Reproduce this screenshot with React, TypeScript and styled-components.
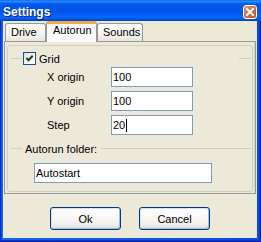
import React from "react";
import styled, { createGlobalStyle, css } from "styled-components";

const Global = createGlobalStyle`
  html, body { margin: 0; padding: 0; overflow: hidden; background: #ffffff; }
  * { box-sizing: border-box; }
`;

const UI_FONT = `"Liberation Sans", Arial, sans-serif`;

const Window = styled.div`
  width: 261px;
  height: 242px;
  display: flex;
  flex-direction: column;
  background: linear-gradient(to right, #0019cf 0px, #0842d8 1px, #1b63ec 2px, #0a48dc 100%);
  padding: 0 4px 4px 3px;
  font-family: ${UI_FONT};
  font-size: 11px;
  color: #000;
  box-shadow: inset -1px -1px 0 #001a9e, inset -2px -2px 0 #0a3fd0;
`;

const TitleBar = styled.div`
  height: 21px;
  margin: 0 -4px 0 -3px;
  padding: 0 4px 0 3px;
  display: flex;
  align-items: center;
  background: linear-gradient(
    to bottom,
    #0058ee 0%,
    #3593ff 5%,
    #1a7fff 10%,
    #0264f0 16%,
    #0057e5 24%,
    #0055eb 56%,
    #005bf5 66%,
    #0466fc 78%,
    #0060ef 88%,
    #0052d6 94%,
    #003ea6 100%
  );
`;

const Title = styled.span`
  color: #ffffff;
  font-family: ${UI_FONT};
  font-weight: bold;
  font-size: 12px;
  margin-top: 2px;
  text-shadow: 1px 1px 0 #0a1e8a;
`;

const CloseButton = styled.div`
  margin-left: auto;
  margin-top: 3px;
  width: 14px;
  height: 14px;
  border: 1px solid #ffffff;
  border-radius: 3px;
  background: linear-gradient(135deg, #e89670 0%, #d66f45 45%, #b9532a 100%);
  display: flex;
  align-items: center;
  justify-content: center;
`;

const Client = styled.div`
  flex: 1;
  background: #ece9d8;
  display: flex;
  flex-direction: column;
`;

const TabStrip = styled.div`
  height: 20px;
  padding-left: 2px;
  display: flex;
  align-items: flex-end;
  position: relative;
  z-index: 1;
`;

const Tab = styled.div<{ $active?: boolean; $w: number }>`
  width: ${(p) => p.$w}px;
  height: 18px;
  margin-bottom: 0;
  border: 1px solid #919b9c;
  border-bottom: none;
  border-radius: 3px 3px 0 0;
  background: linear-gradient(to bottom, #ffffff 0%, #f5f4ef 60%, #e7e5dc 100%);
  padding: 2px 0 0 5px;
  font-size: 11px;
  white-space: nowrap;
  ${(p) =>
    p.$active &&
    css`
      height: 21px;
      margin-bottom: -1px;
      border-top: 3px solid #f0a830;
      border-color: #f4b84c #919b9c #919b9c #919b9c;
      border-top-color: #f3a945;
      background: #fcfcfe;
      padding: 0 0 0 6px;
    `}
`;

const TabPanel = styled.div`
  margin-left: 1px;
  width: 252px;
  border: 1px solid #919b9c;
  background: #ece9d8;
  padding: 3px 2px 1px 2px;
  box-shadow: inset -1px 0 0 #d6d3c6;
`;

const Frame = styled.div`
  border: 1px solid #d0d0bf;
  border-radius: 3px;
  padding: 6px 1px 8px 3px;
  display: flex;
  flex-direction: column;
`;

const SectionHeader = styled.div<{ $gap?: number }>`
  height: 13px;
  display: flex;
  align-items: center;
  margin-top: ${(p) => p.$gap ?? 0}px;
`;

const Rule = styled.div<{ $w?: number }>`
  height: 1px;
  background: #d0d0bf;
  ${(p) => (p.$w ? `width: ${p.$w}px;` : `flex: 1;`)}
`;

const CheckBox = styled.div`
  width: 13px;
  height: 13px;
  margin-left: 1px;
  border: 1px solid #1c5180;
  background: linear-gradient(135deg, #dcdcd7 0%, #f5f5f2 50%, #ffffff 100%);
  display: flex;
  align-items: center;
  justify-content: center;
`;

const CheckLabel = styled.span`
  margin-left: 3px;
  flex: 1;
`;

const Caption = styled.span`
  margin: 0 4px 0 3px;
`;

const FieldGrid = styled.div`
  margin-top: 2px;
  margin-left: 36px;
  display: grid;
  grid-template-columns: 64px 82px;
  grid-auto-rows: 20px;
  row-gap: 4px;
  align-items: center;
`;

const Label = styled.span`
  white-space: nowrap;
`;

const Field = styled.div<{ $w?: number; $indent?: number; $gap?: number }>`
  height: 20px;
  ${(p) => (p.$w ? `width: ${p.$w}px;` : "")}
  margin-left: ${(p) => p.$indent ?? 0}px;
  margin-top: ${(p) => p.$gap ?? 0}px;
  border: 1px solid #7f9db9;
  background: #ffffff;
  padding: 0 0 0 1px;
  display: flex;
  align-items: center;
  white-space: nowrap;
`;

const Caret = styled.span`
  display: inline-block;
  width: 1px;
  height: 13px;
  background: #000;
  margin-left: 1px;
`;

const ButtonRow = styled.div`
  margin-top: 13px;
  display: flex;
  justify-content: center;
  gap: 18px;
`;

const Button = styled.div`
  width: 71px;
  height: 23px;
  border: 1px solid #003c74;
  border-radius: 3px;
  background: linear-gradient(to bottom, #ffffff 0%, #f7f6f2 55%, #ecebe5 85%, #d8d4c8 100%);
  box-shadow: inset -1px -1px 0 #a3b8f0, inset 1px 1px 0 #d5e2fb;
  display: flex;
  align-items: center;
  justify-content: center;
  font-size: 11px;
`;

export default function App() {
  return (
    <>
      <Global />
      <Window>
        <TitleBar>
          <Title>Settings</Title>
          <CloseButton>
            <svg width="10" height="10" viewBox="0 0 10 10">
              <path d="M2 2 L8 8 M8 2 L2 8" stroke="#ffffff" strokeWidth="2" strokeLinecap="square" />
            </svg>
          </CloseButton>
        </TitleBar>
        <Client>
          <TabStrip>
            <Tab $w={41}>Drive</Tab>
            <Tab $w={51} $active>
              Autorun
            </Tab>
            <Tab $w={46}>Sounds</Tab>
          </TabStrip>
          <TabPanel>
            <Frame>
              <SectionHeader>
                <Rule $w={11} />
                <CheckBox>
                  <svg width="11" height="11" viewBox="0 0 11 11">
                    <path d="M2.5 5 L4.5 7.2 L8.7 2.8" stroke="#22401a" strokeWidth="2" fill="none" />
                  </svg>
                </CheckBox>
                <CheckLabel>Grid</CheckLabel>
                <Rule $w={12} />
              </SectionHeader>
              <FieldGrid>
                <Label>X origin</Label>
                <Field>100</Field>
                <Label>Y origin</Label>
                <Field>100</Field>
                <Label>Step</Label>
                <Field>
                  20
                  <Caret />
                </Field>
              </FieldGrid>
              <SectionHeader $gap={7}>
                <Rule $w={11} />
                <Caption>Autorun folder:</Caption>
                <Rule />
              </SectionHeader>
              <Field $w={178} $indent={23} $gap={8}>
                Autostart
              </Field>
            </Frame>
          </TabPanel>
          <ButtonRow>
            <Button>Ok</Button>
            <Button>Cancel</Button>
          </ButtonRow>
        </Client>
      </Window>
    </>
  );
}
